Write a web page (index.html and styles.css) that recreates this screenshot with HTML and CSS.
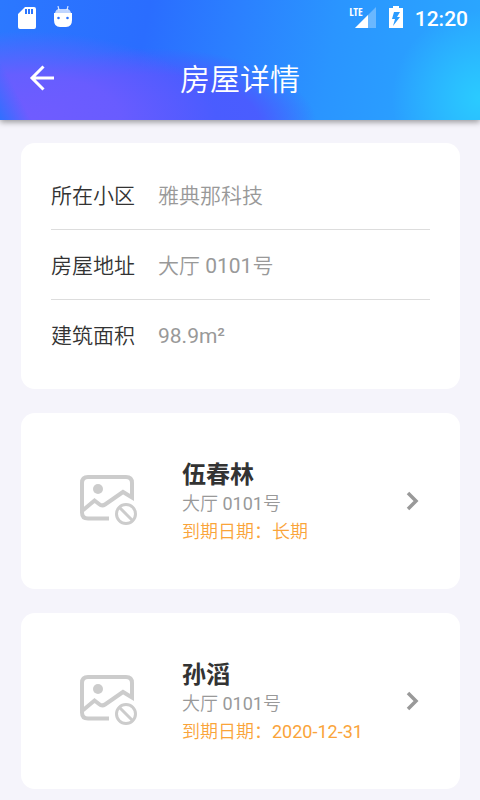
FILE: index.html
```html
<!DOCTYPE html>
<html lang="zh-CN">
<head>
<meta charset="utf-8">
<meta name="viewport" content="width=device-width, initial-scale=1">
<title>房屋详情</title>
<link rel="stylesheet" href="styles.css">
</head>
<body>
<header class="header">
  <div class="status">
    <div class="status-group status-left">
      <svg width="18" height="22" viewBox="0 0 18 22" fill="#fff" aria-hidden="true"><path fill-rule="evenodd" d="M7 0H16Q18 0 18 2V20Q18 22 16 22H2Q0 22 0 20V7ZM7 2V7H9V2ZM10 2V7H12V2ZM13 2V7H15V2Z"/></svg>
      <svg width="18" height="22" viewBox="0 0 18 22" fill="#fff" aria-hidden="true"><path d="M4 0L5 4M14 0L13 4" stroke="#fff" stroke-opacity=".8" stroke-width="1.2"/><path d="M1 7Q2 3 5 3H13Q16 3 17 7Z" fill-opacity=".7"/><path fill-rule="evenodd" d="M0 7H18V14Q18 21 12 21H6Q0 21 0 14ZM4.500 10.700A1.300 1.300 0 1 0 4.500 13.300A1.300 1.300 0 1 0 4.500 10.700ZM13.500 10.700A1.300 1.300 0 1 0 13.500 13.300A1.300 1.300 0 1 0 13.500 10.700Z"/></svg>
    </div>
    <div class="status-group status-right">
      <div class="signal">
        <span class="lte">LTE</span>
        <svg width="21" height="21" viewBox="0 0 21 21" fill="#fff" aria-hidden="true"><path d="M21 0V21H0Z" fill-opacity=".3"/><path d="M13 8V21H0Z"/></svg>
      </div>
      <svg width="14" height="22" viewBox="0 0 14 22" fill="#fff" aria-hidden="true"><path fill-rule="evenodd" d="M4 0H10V2H14V22H0V2H4ZM5 6L3 13H6L4 20L11 11H8L11 6Z"/></svg>
      <span class="clock">12:20</span>
    </div>
  </div>
  <div class="appbar">
    <button class="back" type="button" aria-label="返回">
      <svg width="26" height="26" viewBox="0 0 26 26" fill="none" stroke="#fff" stroke-width="3" aria-hidden="true"><path d="M25 13H4M14.500 1.500L3 13L14.500 24.500"/></svg>
    </button>
    <h1 class="title">房屋详情</h1>
  </div>
</header>
<main class="content">
  <dl class="card info">
    <div class="row"><dt>所在小区</dt><dd>雅典那科技</dd></div>
    <div class="row"><dt>房屋地址</dt><dd>大厅 0101号</dd></div>
    <div class="row"><dt>建筑面积</dt><dd>98.9m²</dd></div>
  </dl>
  <a class="card person" href="#wu">
    <svg class="photo" width="60" height="52" viewBox="0 0 60 52" fill="none" stroke="#ccc" stroke-width="4" aria-hidden="true"><path d="M29 43.500H8Q2 43.500 2 37.500V8Q2 2 8 2H46Q52 2 52 8V22.500L43 17L25 29.500Q22 31.500 19 29L14.500 25.500L2 36"/><circle cx="18" cy="14" r="5" fill="#ccc" stroke="none"/><circle cx="46" cy="39" r="9.500" stroke-width="3"/><path d="M39.500 32.500L52.500 45.500" stroke-width="3"/></svg>
    <div class="detail">
      <h2 class="name">伍春林</h2>
      <p class="address">大厅 0101号</p>
      <p class="expiry">到期日期：长期</p>
    </div>
    <svg class="chevron" width="14" height="20" viewBox="0 0 14 20" fill="none" stroke="#999" stroke-width="3.500" aria-hidden="true"><path d="M2 2L10 10L2 18"/></svg>
  </a>
  <a class="card person" href="#sun">
    <svg class="photo" width="60" height="52" viewBox="0 0 60 52" fill="none" stroke="#ccc" stroke-width="4" aria-hidden="true"><path d="M29 43.500H8Q2 43.500 2 37.500V8Q2 2 8 2H46Q52 2 52 8V22.500L43 17L25 29.500Q22 31.500 19 29L14.500 25.500L2 36"/><circle cx="18" cy="14" r="5" fill="#ccc" stroke="none"/><circle cx="46" cy="39" r="9.500" stroke-width="3"/><path d="M39.500 32.500L52.500 45.500" stroke-width="3"/></svg>
    <div class="detail">
      <h2 class="name">孙滔</h2>
      <p class="address">大厅 0101号</p>
      <p class="expiry">到期日期：2020-12-31</p>
    </div>
    <svg class="chevron" width="14" height="20" viewBox="0 0 14 20" fill="none" stroke="#999" stroke-width="3.500" aria-hidden="true"><path d="M2 2L10 10L2 18"/></svg>
  </a>
</main>
</body>
</html>
```
FILE: styles.css
```css
* { box-sizing: border-box; }
body, h1, h2, p, dl, dd { margin: 0; }
body {
  background: #f5f4fb;
  color: #333;
  font-family: Roboto, "Noto Sans CJK SC", sans-serif;
}
.header {
  color: #fff;
  background:
    radial-gradient(circle at 100% 82%, #2acbff 0, rgba(42, 203, 255, 0) 18%),
    linear-gradient(62deg, #2f70ff 0, rgba(47, 112, 255, 0) 28px),
    radial-gradient(ellipse 40% 72% at 5% 98%, #705cff 0, rgba(108, 92, 255, .9) 50%, rgba(90, 92, 255, 0) 100%),
    radial-gradient(ellipse 34% 64% at 32% 104%, #4b5bff 0, rgba(75, 91, 255, .95) 65%, rgba(75, 91, 255, 0) 100%),
    linear-gradient(100deg, #2b78ff 0, #2a6dff 30%, #2b80ff 48%, #2a95ff 68%, #2aa8ff 100%);
  box-shadow: 0 2px 6px rgba(0, 0, 0, .4);
}
.status {
  display: flex;
  justify-content: space-between;
  height: 36px;
  padding: 6px 12px 0 18px;
}
.status-group { display: flex; align-items: flex-start; }
.status-left { gap: 18px; }
.status-left svg:first-child { margin-top: 1px; }
.status-right { gap: 13px; }
.signal { display: flex; padding-top: 1px; }
.lte {
  margin-right: -8px;
  font: bold 11px/10px "Liberation Sans Narrow", "Open Sans Condensed", "DejaVu Sans Condensed", sans-serif;
}
.clock {
  margin-left: -1px;
  font-size: 21px;
  font-weight: 500;
  line-height: 26px;
}
.appbar {
  display: grid;
  grid-template-columns: 84px 1fr 84px;
  align-items: center;
  height: 84px;
}
.back {
  display: flex;
  width: 84px;
  height: 84px;
  padding: 0;
  border: 0;
  background: none;
  align-items: center;
  justify-content: center;
}
.title {
  padding-top: 3px;
  font-size: 30px;
  font-weight: 350;
  line-height: 36px;
  text-align: center;
}
.content {
  display: flex;
  flex-direction: column;
  gap: 24px;
  padding: 23px 20px 11px 21px;
}
.card {
  border-radius: 14px;
  background: #fff;
}
.info { padding: 17px 30px 20px; }
.row {
  display: flex;
  gap: 23px;
  padding: 21px 0 18px;
  font-size: 21px;
  line-height: 30px;
}
.row + .row { border-top: 1px solid #ddd; }
.row dt { font-weight: 350; }
.row dd, .address, .expiry {
  font-family: Roboto, "Noto Sans CJK SC DemiLight", "Noto Sans CJK SC", sans-serif;
}
.row dd { color: #999; }
.person {
  display: flex;
  align-items: center;
  height: 176px;
  padding: 0 40px 0 59px;
  color: inherit;
  text-decoration: none;
}
.detail {
  flex: 1;
  margin-left: 42px;
  padding-top: 4px;
}
.name {
  font-size: 24px;
  line-height: 30px;
}
.address, .expiry {
  font-size: 18px;
  line-height: 28px;
}
.address { color: #999; }
.expiry { color: #faa43a; }
```
